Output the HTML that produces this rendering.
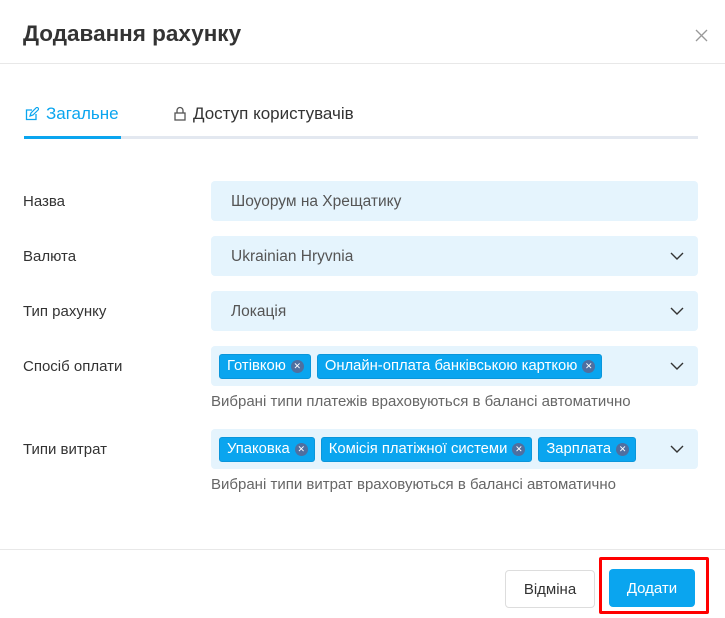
<!DOCTYPE html>
<html><head><meta charset="utf-8"><style>
*{box-sizing:border-box;margin:0;padding:0}
body{width:725px;height:618px;background:#fff;font-family:"Liberation Sans",Arial,sans-serif;position:relative;overflow:hidden;color:#333}
.abs{position:absolute}
.title{left:23px;top:21px;font-size:22.5px;font-weight:bold;color:#333}
.hdiv{left:0;right:0;height:1px;background:#e8e8e8}
.lbl{left:23px;font-size:15px;color:#333}
.inp{left:211px;width:487px;height:40px;background:#e5f4fd;border-radius:4px;font-size:15.5px;color:#555;padding-left:20px;line-height:41px}
.chev{position:absolute;right:14px;top:16px;width:14px;height:8px}
.tags{display:flex;gap:6px;padding:8px 0 0 8px}
.tag{background:#0aa5ef;color:#fff;font-size:14.8px;height:25px;line-height:25px;border-radius:3px;padding:0 6px 0 7px;display:flex;align-items:center;border:1px solid #0a96db}
.x{width:13px;height:13px;border-radius:50%;background:#4f6fa0;color:#fff;font-size:9px;line-height:13px;text-align:center;margin-left:5px}
.hint{left:211px;font-size:15px;color:#666}
</style></head><body>
<div class="abs title">Додавання рахунку</div>
<svg class="abs" style="left:695px;top:29px" width="13" height="13" viewBox="0 0 13 13"><path d="M1 1L12 12M12 1L1 12" stroke="#999" stroke-width="1.3"/></svg>
<div class="abs hdiv" style="top:63px"></div>

<svg class="abs" style="left:25px;top:107px" width="14" height="14" viewBox="0 0 14 14"><path d="M11 7v5.5H1.5V3H7" fill="none" stroke="#0aa5ef" stroke-width="1.3"/><path d="M5 9l1-3 6-6 2 2-6 6z" fill="none" stroke="#0aa5ef" stroke-width="1.2"/></svg>
<div class="abs" style="left:46px;top:104px;font-size:17px;color:#0aa5ef">Загальне</div>
<svg class="abs" style="left:174px;top:106px" width="12" height="15" viewBox="0 0 12 15"><path d="M3 7V4.5a3 3 0 016 0V7" fill="none" stroke="#555" stroke-width="1.3"/><rect x="1" y="7" width="10" height="7" fill="none" stroke="#555" stroke-width="1.3"/></svg>
<div class="abs" style="left:193px;top:104px;font-size:17px;color:#333">Доступ користувачів</div>
<div class="abs" style="left:24px;top:136px;width:674px;height:3px;background:#e3e8f0"></div>
<div class="abs" style="left:24px;top:136px;width:97px;height:3px;background:#0aa5ef"></div>

<div class="abs lbl" style="top:193px">Назва</div>
<div class="abs inp" style="top:181px">Шоуорум на Хрещатику</div>
<div class="abs lbl" style="top:248px">Валюта</div>
<div class="abs inp" style="top:236px">Ukrainian Hryvnia<svg class="chev" viewBox="0 0 14 8"><path d="M1 1l6 6 6-6" fill="none" stroke="#333" stroke-width="1.4"/></svg></div>
<div class="abs lbl" style="top:303px">Тип рахунку</div>
<div class="abs inp" style="top:291px">Локація<svg class="chev" viewBox="0 0 14 8"><path d="M1 1l6 6 6-6" fill="none" stroke="#333" stroke-width="1.4"/></svg></div>

<div class="abs lbl" style="top:358px">Спосіб оплати</div>
<div class="abs inp" style="top:346px;padding:0;line-height:normal"><div class="tags"><div class="tag">Готівкою<span class="x">✕</span></div><div class="tag">Онлайн-оплата банківською карткою<span class="x">✕</span></div></div><svg class="chev" viewBox="0 0 14 8"><path d="M1 1l6 6 6-6" fill="none" stroke="#333" stroke-width="1.4"/></svg></div>
<div class="abs hint" style="top:393px">Вибрані типи платежів враховуються в балансі автоматично</div>

<div class="abs lbl" style="top:441px">Типи витрат</div>
<div class="abs inp" style="top:429px;padding:0;line-height:normal"><div class="tags"><div class="tag">Упаковка<span class="x">✕</span></div><div class="tag">Комісія платіжної системи<span class="x">✕</span></div><div class="tag">Зарплата<span class="x">✕</span></div></div><svg class="chev" viewBox="0 0 14 8"><path d="M1 1l6 6 6-6" fill="none" stroke="#333" stroke-width="1.4"/></svg></div>
<div class="abs hint" style="top:476px">Вибрані типи витрат враховуються в балансі автоматично</div>

<div class="abs hdiv" style="top:549px"></div>
<div class="abs" style="left:505px;top:570px;width:90px;height:38px;border:1px solid #ddd;border-radius:4px;text-align:center;line-height:38px;font-size:15px;color:#333">Відміна</div>
<div class="abs" style="left:599px;top:557px;width:110px;height:57px;border:3px solid #f00;border-radius:2px"></div>
<div class="abs" style="left:609px;top:569px;width:86px;height:38px;background:#0aa5ef;border-radius:4px;text-align:center;line-height:40px;font-size:15px;color:#fff">Додати</div>
</body></html>
